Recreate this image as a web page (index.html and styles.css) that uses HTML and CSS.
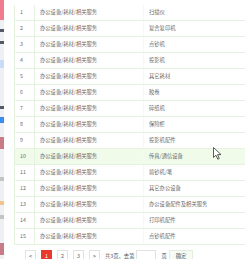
FILE: index.html
```html
<!DOCTYPE html>
<html>
<head>
<meta charset="utf-8">
<link rel="stylesheet" href="styles.css">
</head>
<body>
<div class="page">
  <div class="sidebar">
    <span class="sb sb-pink"></span>
    <span class="sb sb-gap1"></span>
    <span class="sb sb-dark"></span>
    <span class="sb sb-gap2"></span>
    <span class="sb sb-dark"></span>
    <span class="sb sb-gap3"></span>
    <span class="sb sb-lblue"></span>
    <span class="sb sb-gap4"></span>
    <span class="sb sb-dark"></span>
    <span class="sb sb-gap5"></span>
    <span class="sb sb-blue"></span>
    <span class="sb sb-gap6"></span>
    <span class="sb sb-rose"></span>
    <span class="sb sb-gap7"></span>
    <span class="sb sb-grey"></span>
    <span class="sb sb-gap8"></span>
    <span class="sb sb-orange"></span>
    <span class="sb sb-gap9"></span>
    <span class="sb sb-grey"></span>
    <span class="sb sb-gap10"></span>
    <span class="sb sb-rose"></span>
  </div>
  <div class="main">
    <table class="list">
      <tbody>
        <tr><td class="c-no">1</td><td class="c-cat">办公设备/耗材/相关服务</td><td class="c-sub">扫描仪</td></tr>
        <tr><td class="c-no">2</td><td class="c-cat">办公设备/耗材/相关服务</td><td class="c-sub">复合复印机</td></tr>
        <tr><td class="c-no">3</td><td class="c-cat">办公设备/耗材/相关服务</td><td class="c-sub">点钞机</td></tr>
        <tr><td class="c-no">4</td><td class="c-cat">办公设备/耗材/相关服务</td><td class="c-sub">投影机</td></tr>
        <tr><td class="c-no">5</td><td class="c-cat">办公设备/耗材/相关服务</td><td class="c-sub">其它耗材</td></tr>
        <tr><td class="c-no">6</td><td class="c-cat">办公设备/耗材/相关服务</td><td class="c-sub">胶卷</td></tr>
        <tr><td class="c-no">7</td><td class="c-cat">办公设备/耗材/相关服务</td><td class="c-sub">碎纸机</td></tr>
        <tr><td class="c-no">8</td><td class="c-cat">办公设备/耗材/相关服务</td><td class="c-sub">保险柜</td></tr>
        <tr><td class="c-no">9</td><td class="c-cat">办公设备/耗材/相关服务</td><td class="c-sub">投影机配件</td></tr>
        <tr class="hover"><td class="c-no">10</td><td class="c-cat">办公设备/耗材/相关服务</td><td class="c-sub">传真/通信设备</td></tr>
        <tr><td class="c-no">11</td><td class="c-cat">办公设备/耗材/相关服务</td><td class="c-sub">验钞机/笔</td></tr>
        <tr><td class="c-no">12</td><td class="c-cat">办公设备/耗材/相关服务</td><td class="c-sub">其它办公设备</td></tr>
        <tr><td class="c-no">13</td><td class="c-cat">办公设备/耗材/相关服务</td><td class="c-sub">办公设备配件及相关服务</td></tr>
        <tr><td class="c-no">14</td><td class="c-cat">办公设备/耗材/相关服务</td><td class="c-sub">打印机配件</td></tr>
        <tr><td class="c-no">15</td><td class="c-cat">办公设备/耗材/相关服务</td><td class="c-sub">点钞机配件</td></tr>
      </tbody>
    </table>
    <div class="pager">
      <span class="pg">&lt;</span>
      <span class="pg pg-cur">1</span>
      <span class="pg">2</span>
      <span class="pg">3</span>
      <span class="pg">&gt;</span>
      <span class="pg-text">共3页，去第</span>
      <span class="pg-input"></span>
      <span class="pg-text">页</span>
      <span class="pg-btn">确定</span>
    </div>
  </div>
</div>
<svg class="cursor" width="9" height="13" viewBox="0 0 9 13">
  <path d="M0.5 0.5 L0.5 10.5 L3 8.2 L4.8 12.2 L6.3 11.5 L4.6 7.6 L8 7.6 Z" fill="#fff" stroke="#333" stroke-width="0.8" stroke-linejoin="round"/>
</svg>
</body>
</html>
```

FILE: styles.css
```css
html, body {
  margin: 0;
  padding: 0;
  background: #fff;
  overflow: hidden;
}
body {
  width: 245px;
  height: 259px;
  position: relative;
  font-family: "Noto Sans CJK SC", "Noto Sans", sans-serif;
  color: #6a6a6a;
}
.page {
  display: flex;
  height: 259px;
}
.sidebar {
  width: 4px;
  display: flex;
  flex-direction: column;
  background: #eef0f3;
  flex-shrink: 0;
}
.sb { display: block; width: 4px; flex-shrink: 0; }
.sb-pink { height: 20px; background: #f07a90; }
.sb-gap1 { height: 9px; }
.sb-dark { height: 3px; background: #555a66; }
.sb-gap2 { height: 9px; }
.sb-gap3 { height: 16px; }
.sb-lblue { height: 8px; background: #c9dcf7; }
.sb-gap4 { height: 38px; }
.sb-gap5 { height: 8px; }
.sb-blue { height: 6px; background: #3b8ef0; }
.sb-gap6 { height: 14px; }
.sb-rose { height: 12px; background: #c87b86; }
.sb-gap7 { height: 28px; }
.sb-grey { height: 4px; background: #c4c4c4; }
.sb-gap8 { height: 20px; }
.sb-orange { height: 4px; background: #f0c48a; }
.sb-gap9 { height: 10px; }
.sb-gap10 { height: 24px; }

.main {
  flex: 1;
  padding-left: 10px;
  padding-top: 5px;
  min-width: 0;
}
.list {
  border-collapse: collapse;
  width: 240px;
  table-layout: fixed;
  font-size: 5.3px;
  line-height: 15px;
}
.list td {
  height: 15px;
  padding: 0 0 0 5px;
  border-bottom: 1px solid #e6f2e0;
  white-space: nowrap;
  overflow: hidden;
}
.c-no { width: 14px; border-left: 1px solid #e6f2e0; border-right: 1px solid #e6f2e0; }
.c-cat { width: 103px; border-right: 1px solid #f5f9f2; }
.list tr.hover td { background: #f0fbea; }

.pager {
  display: flex;
  align-items: center;
  gap: 5px;
  margin-top: 5px;
  padding-left: 11px;
  font-size: 5.3px;
  line-height: 7px;
}
.pg {
  width: 9px;
  height: 10px;
  border: 1px solid #e2e2e2;
  display: flex;
  align-items: center;
  justify-content: center;
  color: #666;
  flex-shrink: 0;
}
.pg-cur {
  background: #e8392c;
  border-color: #e8392c;
  color: #fff;
}
.pg-text { color: #555; white-space: nowrap; margin-right: -3px; }
.pg-input {
  width: 18px;
  height: 10px;
  border: 1px solid #e2e2e2;
  flex-shrink: 0;
}
.pg-btn {
  height: 10px;
  padding: 0 6px;
  border: 1px solid #e2eedd;
  background: #f6fbf3;
  display: flex;
  align-items: center;
  color: #555;
  margin-left: 0;
}
.cursor {
  position: absolute;
  left: 213px;
  top: 147px;
}
```
